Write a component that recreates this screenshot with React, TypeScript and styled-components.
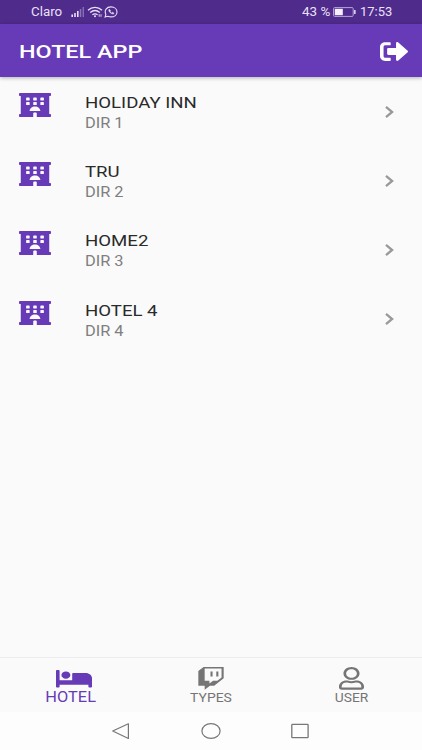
import React from "react";
import styled, { createGlobalStyle } from "styled-components";
import { FaBed, FaHotel, FaRegUser, FaSignOutAlt, FaTwitch } from "react-icons/fa";

const purple = "#673ab7";

const GlobalStyle = createGlobalStyle`
  * { box-sizing: border-box; }
  body { margin: 0; background: #fafafa; font-family: Roboto, "Noto Sans", sans-serif; }
`;

const Screen = styled.div`
  display: flex;
  flex-direction: column;
  width: 422px;
  height: 750px;
  overflow: hidden;
  background: #fafafa;
`;

const WideText = styled.span<{ $size: number; $stretch: number; $color: string; $weight?: number; $center?: boolean }>`
  display: block;
  white-space: nowrap;
  font-size: ${(p) => p.$size}px;
  line-height: 20px;
  font-weight: ${(p) => p.$weight ?? 400};
  color: ${(p) => p.$color};
  transform: scaleX(${(p) => p.$stretch});
  transform-origin: ${(p) => (p.$center ? "center" : "left")};
`;

const IconBox = styled.span<{ $width: number; $height: number }>`
  display: block;
  flex: none;
  width: ${(p) => p.$width}px;
  height: ${(p) => p.$height}px;

  svg {
    display: block;
    width: 100%;
    height: 100%;
  }
`;

const StatusBar = styled.div`
  display: flex;
  justify-content: space-between;
  height: 24px;
  flex: none;
  padding: 2px 30px 2px 31px;
  background: #4f2b8c;
`;

const StatusGroup = styled.div`
  display: flex;
  align-items: center;
`;

const StatusSlot = styled.div<{ $width: number }>`
  width: ${(p) => p.$width}px;
`;

const Header = styled.header`
  display: flex;
  flex: none;
  align-items: center;
  justify-content: space-between;
  height: 53px;
  padding: 2px 14px 0 19px;
  background: ${purple};
  color: #fff;
  box-shadow: 0 1px 4px rgba(0, 0, 0, 0.3);
`;

const HotelList = styled.main`
  flex: 1;
  padding-top: 7px;
`;

const HotelRow = styled.div`
  display: grid;
  grid-template-columns: 65.5px 1fr 9px;
  height: 69.2px;
  padding: 9px 28.5px 0 19px;
  color: ${purple};
`;

const HotelText = styled.div`
  display: flex;
  flex-direction: column;
`;

const ChevronSlot = styled.div`
  padding-top: 12.7px;

  svg {
    display: block;
  }
`;

const TabBar = styled.nav`
  display: grid;
  grid-template-columns: repeat(3, 1fr);
  flex: none;
  height: 55px;
  border-top: 1px solid #ececec;
  background: #fafafa;
`;

const Tab = styled.div<{ $active?: boolean }>`
  display: flex;
  flex-direction: column;
  align-items: center;
  padding-top: 9px;
  color: ${(p) => (p.$active ? purple : "#757575")};
`;

const TabIcon = styled.div<{ $height: number; $indent?: number }>`
  display: flex;
  height: ${(p) => p.$height}px;
  padding-left: ${(p) => p.$indent ?? 0}px;
  align-items: flex-start;
`;

const SystemBar = styled.div`
  display: flex;
  justify-content: space-between;
  flex: none;
  height: 38px;
  padding: 10px 113px 0 111px;
  background: #fdfdfd;
`;

const hotels = [
  { name: "HOLIDAY INN", address: "DIR 1" },
  { name: "TRU", address: "DIR 2" },
  { name: "HOME2", address: "DIR 3" },
  { name: "HOTEL 4", address: "DIR 4" },
];

const Signal = () => (
  <svg width="14" height="12" viewBox="0 0 14 12" fill="#eae0f8">
    <path d="M.4 8.6h1.6V11H.4zM3.2 7h1.6v4H3.2zM6 5h1.6v6H6z" />
    <path d="M8.8 3h1.5v8H8.8zM11.6 1h1.3v10h-1.3z" opacity=".4" />
  </svg>
);

const Wifi = () => (
  <svg width="16" height="12" viewBox="0 0 16 12" fill="none" stroke="#eae0f8" strokeWidth="1.3">
    <path d="M1 4.2C5 .4 11 .4 15 4.2M3.2 6.6c3-2.6 6.6-2.6 9.6 0M5.4 8.8c1.7-1.3 3.5-1.3 5.2 0" />
    <circle cx="8" cy="10.3" r="1" fill="#eae0f8" stroke="none" />
    <path d="M12.2 8.2v2.6M14 8.2v2.6" strokeWidth=".9" />
  </svg>
);

const Chat = () => (
  <svg width="14" height="12" viewBox="0 0 14 12" fill="none" stroke="#eae0f8">
    <path d="M1.1 11l.8-2.6C-.1 4.4 2.6.9 7 .9c3.4 0 6 2.1 6 5s-2.6 5-6 5c-1.2 0-2.2-.2-3.1-.6z" strokeWidth="1.1" />
    <path d="M4.7 3.8c0 2.1 2 4.1 4.8 4.3l.4-1.1-1.6-.7-.8.7L6 5.6l.6-.7-.7-1.3z" fill="#eae0f8" strokeWidth=".5" />
  </svg>
);

const Battery = () => (
  <svg width="24" height="10" viewBox="0 0 24 10">
    <rect x=".6" y=".6" width="19.6" height="8.8" rx="1" fill="none" stroke="#b9a4da" />
    <path d="M1.8 1.8h8v6.4h-8z" fill="#f5effe" />
    <path d="M21.1 3h1.5v4h-1.5z" fill="#eae0f8" />
  </svg>
);

const Chevron = () => (
  <svg width="9" height="12" viewBox="0 0 9 12" fill="none" stroke="#999" strokeWidth="2.3">
    <path d="M1 .9 7.1 6 1 11.1" />
  </svg>
);

export default function App() {
  return (
    <>
      <GlobalStyle />
      <Screen>
        <StatusBar>
          <StatusGroup>
            <StatusSlot $width={39.5}>
              <WideText $size={12} $stretch={1.11} $color="#eae0f8">Claro</WideText>
            </StatusSlot>
            <Signal />
            <StatusSlot $width={2} />
            <Wifi />
            <StatusSlot $width={1} />
            <Chat />
          </StatusGroup>
          <StatusGroup>
            <StatusSlot $width={30.5}>
              <WideText $size={12} $stretch={1.12} $color="#eae0f8">43 %</WideText>
            </StatusSlot>
            <Battery />
            <StatusSlot $width={3} />
            <StatusSlot $width={32.5}>
              <WideText $size={12} $stretch={1.08} $color="#eae0f8">17:53</WideText>
            </StatusSlot>
          </StatusGroup>
        </StatusBar>
        <Header>
          <WideText $size={19} $stretch={1.23} $color="#fff" $weight={500}>HOTEL APP</WideText>
          <IconBox $width={28.5} $height={25}>
            <FaSignOutAlt preserveAspectRatio="none" />
          </IconBox>
        </Header>
        <HotelList>
          {hotels.map((hotel) => (
            <HotelRow key={hotel.name}>
              <IconBox $width={32} $height={24}>
                <FaHotel preserveAspectRatio="none" />
              </IconBox>
              <HotelText>
                <WideText $size={15.5} $stretch={1.2} $color="#2a2a2a">{hotel.name}</WideText>
                <WideText $size={14} $stretch={1.17} $color="#7f7f7f">{hotel.address}</WideText>
              </HotelText>
              <ChevronSlot>
                <Chevron />
              </ChevronSlot>
            </HotelRow>
          ))}
        </HotelList>
        <TabBar>
          <Tab $active>
            <TabIcon $height={20} $indent={8}>
              <IconBox $width={36} $height={23.5}>
                <FaBed preserveAspectRatio="none" />
              </IconBox>
            </TabIcon>
            <WideText $size={14} $stretch={1.17} $color={purple} $center>HOTEL</WideText>
          </Tab>
          <Tab>
            <TabIcon $height={21}>
              <IconBox $width={28} $height={22.7}>
                <FaTwitch preserveAspectRatio="none" />
              </IconBox>
            </TabIcon>
            <WideText $size={12} $stretch={1.16} $color="#757575" $center>TYPES</WideText>
          </Tab>
          <Tab>
            <TabIcon $height={21}>
              <IconBox $width={25} $height={22.7}>
                <FaRegUser preserveAspectRatio="none" />
              </IconBox>
            </TabIcon>
            <WideText $size={12} $stretch={1.15} $color="#757575" $center>USER</WideText>
          </Tab>
        </TabBar>
        <SystemBar>
          <svg width="19" height="18" viewBox="0 0 19 18" fill="none" stroke="#777" strokeWidth="1.2" strokeLinejoin="round">
            <path d="M1.7 9 17.4 1.8v14.7z" />
          </svg>
          <svg width="20" height="18" viewBox="0 0 20 18" fill="none" stroke="#777" strokeWidth="1.2">
            <ellipse cx="10" cy="9" rx="9.1" ry="7.4" />
          </svg>
          <svg width="18" height="18" viewBox="0 0 18 18" fill="none" stroke="#777" strokeWidth="1.3">
            <rect x=".8" y="2.3" width="16.3" height="13.3" rx=".6" />
          </svg>
        </SystemBar>
      </Screen>
    </>
  );
}
